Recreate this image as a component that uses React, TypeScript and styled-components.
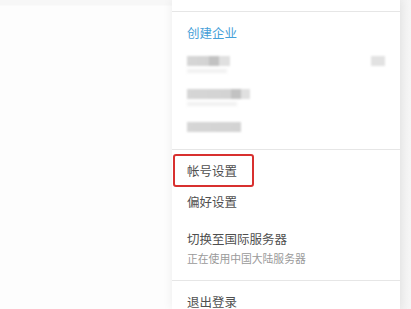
import React from "react";
import styled, { createGlobalStyle } from "styled-components";

const Global = createGlobalStyle`
  html, body { margin: 0; padding: 0; background: #fdfdfd; }
  body { font-family: "Noto Sans CJK SC", "Noto Sans", sans-serif; }
  #root { width: 411px; height: 309px; overflow: hidden; }
`;

const Page = styled.div`
  width: 411px;
  height: 309px;
  display: flex;
  position: relative;
  background: linear-gradient(to bottom, #f7f7f7 0, #f7f7f7 5px, #fdfdfd 6px);
  overflow: hidden;
`;

const Spacer = styled.div`
  width: 172px;
  flex: none;
`;

const Panel = styled.div`
  width: 228px;
  flex: none;
  background: #ffffff;
  box-shadow: 0 0 10px rgba(0, 0, 0, 0.07);
  display: flex;
  flex-direction: column;
  z-index: 1;
`;

const Edge = styled.div`
  flex: 1;
  background: linear-gradient(to right, #f0f0f0, #f6f6f6);
`;

const Section = styled.div<{ $pt?: number; $pb?: number; $last?: boolean }>`
  padding-top: ${(p) => p.$pt ?? 0}px;
  padding-bottom: ${(p) => p.$pb ?? 0}px;
  border-bottom: ${(p) => (p.$last ? "none" : "1px solid #e6e6e6")};
  display: flex;
  flex-direction: column;
`;

const TopStub = styled.div`
  height: 11px;
`;

const Row = styled.div<{ $h: number; $blue?: boolean }>`
  height: ${(p) => p.$h}px;
  padding: 0 15px;
  display: flex;
  align-items: center;
  font-size: 12.5px;
  color: ${(p) => (p.$blue ? "#45a0d8" : "#4f4f4f")};
  white-space: nowrap;
`;

const BlurRow = styled.div`
  height: 33px;
  padding: 8px 15px 0;
  box-sizing: border-box;
  display: flex;
  justify-content: space-between;
  align-items: flex-start;
`;

const BlurStack = styled.div`
  display: flex;
  flex-direction: column;
  gap: 3px;
`;

const BlurBar = styled.div<{ $w: number; $dark: number; $dw: number }>`
  width: ${(p) => p.$w}px;
  height: 10px;
  background: linear-gradient(
    to right,
    #d6d6d6 0,
    #d3d3d3 ${(p) => p.$dark}px,
    #c2c2c2 ${(p) => p.$dark}px,
    #c2c2c2 ${(p) => p.$dark + p.$dw}px,
    #e0e0e0 ${(p) => p.$dark + p.$dw}px
  );
  filter: blur(1.3px);
`;

const BlurLine = styled.div<{ $w: number }>`
  width: ${(p) => p.$w}px;
  height: 4px;
  background: #f1f1f1;
  filter: blur(1.5px);
`;

const BlurSquare = styled.div`
  width: 14px;
  height: 10px;
  margin-right: 0px;
  background: #e2e2e2;
  filter: blur(1.3px);
`;

const Highlight = styled.div`
  height: 33px;
  width: 81px;
  box-sizing: border-box;
  margin-left: 1px;
  border: 2px solid #d8302f;
  border-radius: 3px;
  padding-left: 12px;
  display: flex;
  align-items: center;
  font-size: 12.5px;
  color: #4f4f4f;
  white-space: nowrap;
`;

const ServerRow = styled.div`
  padding: 14px 15px 14px;
  display: flex;
  flex-direction: column;
`;

const Title = styled.div`
  font-size: 12.5px;
  line-height: 18px;
  color: #4f4f4f;
`;

const Sub = styled.div`
  font-size: 10.8px;
  line-height: 16px;
  margin-top: 2px;
  color: #9a9a9a;
`;

export default function App() {
  return (
    <>
      <Global />
      <Page>
        <Spacer />
        <Panel>
          <Section>
            <TopStub />
          </Section>
          <Section $pt={4} $pb={2}>
            <Row $h={32} $blue>
              创建企业
            </Row>
            <BlurRow>
              <BlurStack>
                <BlurBar $w={43} $dark={22} $dw={10} />
                <BlurLine $w={40} />
              </BlurStack>
              <BlurSquare />
            </BlurRow>
            <BlurRow>
              <BlurStack>
                <BlurBar $w={63} $dark={44} $dw={10} />
                <BlurLine $w={50} />
              </BlurStack>
            </BlurRow>
            <BlurRow>
              <BlurStack>
                <BlurBar $w={54} $dark={60} $dw={0} />
              </BlurStack>
            </BlurRow>
          </Section>
          <Section $pt={4}>
            <Highlight>帐号设置</Highlight>
            <Row $h={29}>偏好设置</Row>
            <ServerRow>
              <Title>切换至国际服务器</Title>
              <Sub>正在使用中国大陆服务器</Sub>
            </ServerRow>
          </Section>
          <Section $last $pt={10}>
            <Row $h={20}>退出登录</Row>
          </Section>
        </Panel>
        <Edge />
      </Page>
    </>
  );
}
